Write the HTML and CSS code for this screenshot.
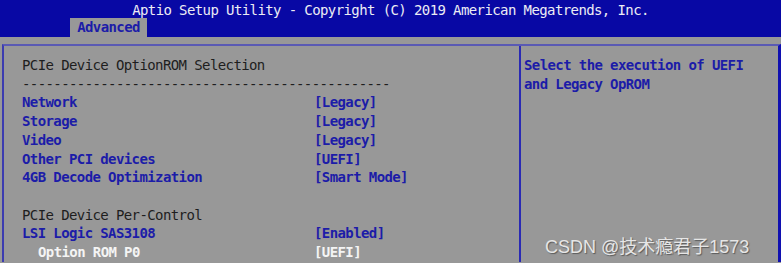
FILE: index.html
```html
<!DOCTYPE html>
<html lang="en">
<head>
    <meta charset="UTF-8">
    <meta name="viewport" content="width=device-width, initial-scale=1.0">
    <title>Aptio Setup Utility</title>
    <link rel="stylesheet" href="styles.css">
</head>
<body>
    <div class="screen">
        <header class="topbar">
            <div class="title">Aptio Setup Utility - Copyright (C) 2019 American Megatrends, Inc.</div>
            <div class="tabs">
                <span class="tab">Advanced</span>
            </div>
        </header>

        <div class="frame">
            <section class="menu">
                <div class="heading">PCIe Device OptionROM Selection</div>
                <div class="heading">-----------------------------------------------</div>
                <div class="row"><span>Network</span><span>[Legacy]</span></div>
                <div class="row"><span>Storage</span><span>[Legacy]</span></div>
                <div class="row"><span>Video</span><span>[Legacy]</span></div>
                <div class="row"><span>Other PCI devices</span><span>[UEFI]</span></div>
                <div class="row"><span>4GB Decode Optimization</span><span>[Smart Mode]</span></div>
                <div class="blank"></div>
                <div class="heading">PCIe Device Per-Control</div>
                <div class="row"><span>LSI Logic SAS3108</span><span>[Enabled]</span></div>
                <div class="row selected"><span class="sub">Option ROM P0</span><span>[UEFI]</span></div>
            </section>
            <aside class="help">
                <p>Select the execution of UEFI<br>and Legacy OpROM</p>
            </aside>
        </div>

        <div class="watermark">CSDN @技术瘾君子1573</div>
    </div>
</body>
</html>
```

FILE: styles.css
```css
body {
    margin: 0;
    padding: 0;
    background-color: #989898;
    font-family: "DejaVu Sans Mono", "Liberation Mono", monospace;
    font-size: 14px;
    font-weight: bold;
    letter-spacing: -0.6px;
}

.screen {
    position: relative;
    width: 781px;
    height: 263px;
    overflow: hidden;
    background-color: #989898;
}

.topbar {
    height: 37px;
    background-color: #0808a4;
    color: #ececf4;
}

.title {
    height: 18px;
    line-height: 20px;
    text-align: center;
    font-weight: normal;
}

.tabs {
    padding-left: 70px;
}

.tab {
    display: inline-block;
    width: 77px;
    height: 19px;
    line-height: 19px;
    text-align: center;
    background-color: #989898;
    color: #1c1ca8;
}

.frame {
    display: flex;
    height: 216px;
    margin-top: 7px;
    margin-left: 2px;
    border-top: 2px solid #5a5ab4;
    border-left: 2px solid #3c3cb0;
    border-right: 3px solid #1010b0;
}

.menu {
    width: 517px;
    padding: 10px 0 0 18px;
    box-sizing: border-box;
    border-right: 2px solid #2a2ab4;
    line-height: 18.7px;
}

.heading {
    color: #1e1e1e;
    font-weight: normal;
}

.row {
    display: grid;
    grid-template-columns: 292px auto;
    color: #1c1ca8;
}

.blank {
    height: 18.7px;
}

.selected {
    color: #f4f4f4;
}

.sub {
    padding-left: 16px;
}

.help {
    flex: 1;
    padding: 10px 0 0 3px;
    color: #1c1ca8;
    line-height: 18.7px;
}

.help p {
    margin: 0;
}

.watermark {
    position: absolute;
    left: 545px;
    top: 232px;
    font-family: "Liberation Sans", "Noto Sans CJK SC", sans-serif;
    font-size: 18px;
    font-weight: normal;
    letter-spacing: 0;
    color: #e6e6e6;
    text-shadow: 1px 1px 1px #5a5a5a;
}
```
